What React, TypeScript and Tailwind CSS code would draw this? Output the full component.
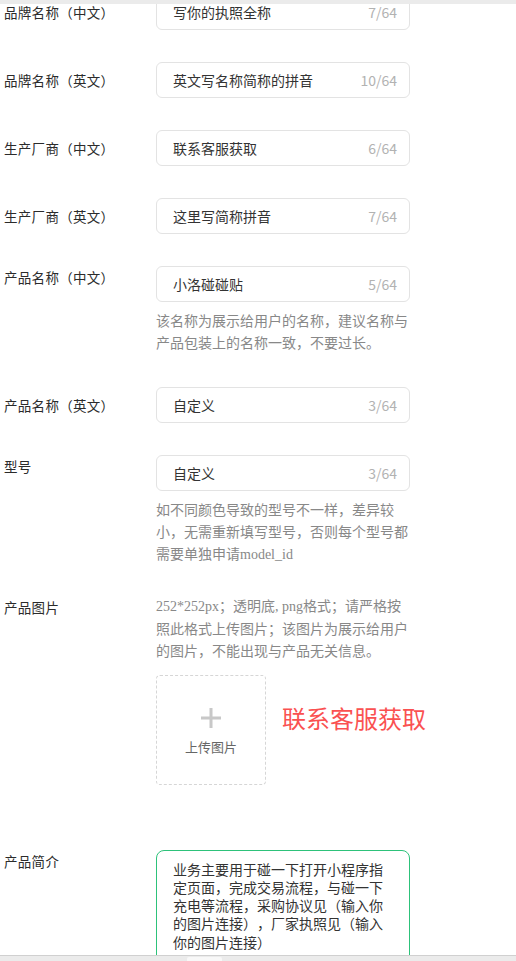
import React from "react";

const cjk = { fontFamily: '"Noto Sans CJK SC", "Noto Sans", sans-serif' };
const mixed = { fontFamily: '"Liberation Serif", "Noto Sans CJK SC", serif' };

function TextField({ value, max }: { value: string; max: number }) {
  return (
    <div className="flex h-[36px] w-[254px] shrink-0 items-center justify-between rounded-[6px] border border-[#e3e3e3] bg-white pl-[16px] pr-[12px]">
      <span className="text-[14px] text-[#333]">{value}</span>
      <span className="text-[14px] text-[#b2b2b2]">
        {value.length}/{max}
      </span>
    </div>
  );
}

function Row({
  label,
  value,
  tip,
  className = "",
}: {
  label: string;
  value: string;
  tip?: string;
  className?: string;
}) {
  if (!tip) {
    return (
      <div className={"flex items-center " + className}>
        <div className="w-[152px] shrink-0 text-[13.5px] tracking-[0.3px] text-[#2b2b2b]">{label}</div>
        <TextField value={value} max={64} />
      </div>
    );
  }
  return (
    <div className={"flex items-start " + className}>
      <div className="w-[152px] shrink-0 pt-[1px] text-[13.5px] leading-[20px] tracking-[0.3px] text-[#2b2b2b]">
        {label}
      </div>
      <div className="w-[254px]">
        <TextField value={value} max={64} />
        <p className="mt-[9px] text-[14px] leading-[22px] text-[#888]" style={mixed}>
          {tip}
        </p>
      </div>
    </div>
  );
}

export default function App() {
  return (
    <div className="relative h-[961px] overflow-hidden bg-white [text-spacing-trim:space-all]" style={cjk}>
      <div className="-mt-[6px] pl-[4px]">
        <Row label="品牌名称（中文）" value="写你的执照全称" />
        <Row className="mt-[32px]" label="品牌名称（英文）" value="英文写名称简称的拼音" />
        <Row className="mt-[32px]" label="生产厂商（中文）" value="联系客服获取" />
        <Row className="mt-[32px]" label="生产厂商（英文）" value="这里写简称拼音" />
        <Row
          className="mt-[32px]"
          label="产品名称（中文）"
          value="小洛碰碰贴"
          tip="该名称为展示给用户的名称，建议名称与产品包装上的名称一致，不要过长。"
        />
        <Row className="mt-[32px]" label="产品名称（英文）" value="自定义" />
        <Row
          className="mt-[32px]"
          label="型号"
          value="自定义"
          tip="如不同颜色导致的型号不一样，差异较小，无需重新填写型号，否则每个型号都需要单独申请model_id"
        />

        <div className="mt-[30px] flex items-start">
          <div className="w-[152px] shrink-0 text-[13.5px] leading-[22px] tracking-[0.3px] text-[#2b2b2b]">产品图片</div>
          <div className="w-[254px]">
            <p className="text-[14px] leading-[22.5px] text-[#888]" style={mixed}>
              252*252px；透明底, png格式；请严格按照此格式上传图片；该图片为展示给用户的图片，不能出现与产品无关信息。
            </p>
            <div className="mt-[11px] flex items-center">
              <div className="flex h-[110px] w-[110px] shrink-0 flex-col items-center justify-center rounded-[4px] border border-dashed border-[#d6d6d6]">
                <svg width="22" height="22" viewBox="0 0 22 22" className="mt-[4px]">
                  <path d="M11 1v20M1 11h20" stroke="#c8c8c8" strokeWidth="3" />
                </svg>
                <span className="mt-[8px] text-[13px] text-[#666]">上传图片</span>
              </div>
              <span className="ml-[16px] -mt-[24px] whitespace-nowrap text-[24px] leading-[30px] text-[#fa5151]">
                联系客服获取
              </span>
            </div>
          </div>
        </div>

        <div className="mt-[65px] flex items-start">
          <div className="w-[152px] shrink-0 pt-[1px] text-[13.5px] leading-[20px] tracking-[0.3px] text-[#2b2b2b]">
            产品简介
          </div>
          <div className="h-[130px] w-[254px] rounded-[8px] border border-[#2dc27a] pl-[16px] pr-[16px] pt-[9px] text-[14px] leading-[18.3px] text-[#333]">
            业务主要用于碰一下打开小程序指定页面，完成交易流程，与碰一下充电等流程，采购协议见（输入你的图片连接），厂家执照见（输入你的图片连接）
          </div>
        </div>
      </div>

      <div className="absolute left-0 right-0 top-0 h-[4px] bg-[#ebebeb]" />
      <div className="absolute bottom-0 left-0 right-0 h-[6px] border-t border-[#d0d0d0] bg-[#ebebeb]">
        <div className="ml-[187px] mt-[1px] h-[5px] w-[35px] rounded-t-[2px] bg-[#f8f8f8]" />
      </div>
    </div>
  );
}
